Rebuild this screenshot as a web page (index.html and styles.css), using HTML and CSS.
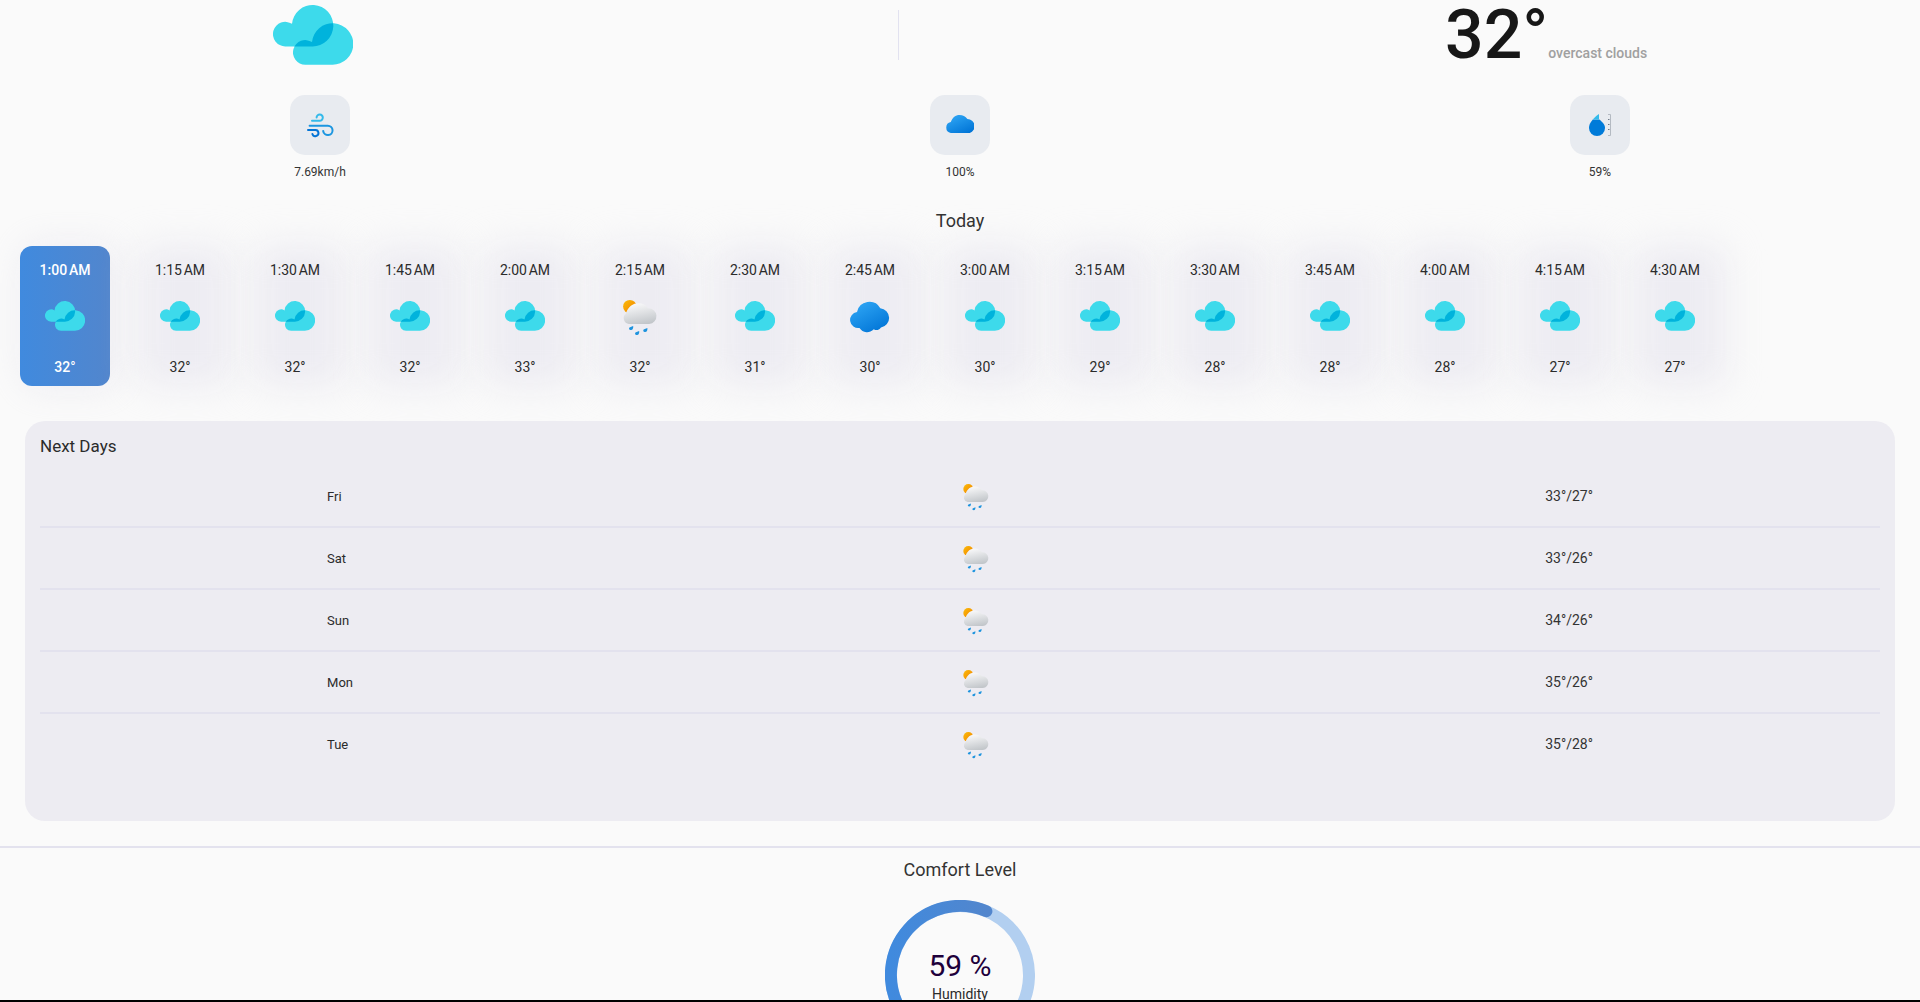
FILE: index.html
```html
<!DOCTYPE html>
<html lang="en">
<head>
<meta charset="utf-8">
<title>Weather</title>
<link rel="stylesheet" href="styles.css">
</head>
<body>
<svg class="defs" aria-hidden="true">
  <defs>
    <linearGradient id="sun-fill" x1="0" y1="0" x2="1" y2="1"><stop offset="0" stop-color="#fbbd08"/><stop offset="1" stop-color="#f07c00"/></linearGradient>
    <linearGradient id="grey-fill" x1="0.3" y1="0" x2="0.6" y2="1"><stop offset="0" stop-color="#fafafb"/><stop offset="1" stop-color="#c2c6ca"/></linearGradient>
    <linearGradient id="blue-fill" x1="0.1" y1="0" x2="0.8" y2="1"><stop offset="0" stop-color="#31a8f6"/><stop offset="1" stop-color="#0074d6"/></linearGradient>
    <linearGradient id="ring-fill" x1="0" y1="0" x2="1" y2="0"><stop offset="0" stop-color="#408ade"/><stop offset="1" stop-color="#5286cd"/></linearGradient>
    <path id="puff" d="M12.3 41.4A12.3 12.3 0 1 1 19 18.8A20.7 20.7 0 1 1 39.3 41.4Z"/>
    <clipPath id="puff-clip"><use href="#puff"/></clipPath>
    <symbol id="clouds" viewBox="0 0 80 60">
      <use href="#puff" fill="#3ddaeb"/>
      <use href="#puff" x="20" y="18.3" fill="#3ddaeb"/>
      <g clip-path="url(#puff-clip)"><use href="#puff" x="20" y="18.3" fill="#00b3dc"/></g>
    </symbol>
    <symbol id="rain" viewBox="0 0 40 40">
      <circle cx="9.8" cy="10.6" r="6.7" fill="url(#sun-fill)"/>
      <path d="M9 28A5.9 5.9 0 0 1 6 17.5C8 10.5 13 7.3 18.5 7.3C22.5 7.3 26 9 28 12.4A7.8 7.8 0 0 1 29.2 28Z" fill="url(#grey-fill)"/>
      <g fill="#1d93de">
        <path d="M13.2 30C13.4 32 12.8 34 11 34C9 34 8.4 32 10 31.2Z"/>
        <path d="M19.2 35C19.4 37 18.8 39 17 39C15 39 14.4 37 16 36.2Z"/>
        <path d="M27.4 32C27.6 34 27 36 25.2 36C23.2 36 22.6 34 24.2 33.2Z"/>
      </g>
    </symbol>
    <symbol id="overcast" viewBox="0 0 40 40">
      <path d="M7 15.9A12.6 12.6 0 0 1 30.3 12.2A9.8 9.8 0 0 1 31 31.6A5 5 0 0 1 23.8 33.2A9 9 0 0 1 9.5 32A8 8 0 0 1 7 15.9Z" fill="url(#blue-fill)"/>
    </symbol>
    <symbol id="wind" viewBox="0 0 28 28">
      <g fill="none" stroke-width="2" stroke-linecap="round">
        <path d="M6 9.7H13.5A3.1 3.1 0 1 0 10.6 6.6" stroke="#35baea"/>
        <path d="M3.6 14.7H21.8A4.7 4.7 0 1 1 17.2 20" stroke="#1c96e0"/>
        <path d="M2 19H9A3.1 3.1 0 1 1 6.4 23" stroke="#0474d6"/>
      </g>
    </symbol>
    <symbol id="cover" viewBox="0 0 28 28">
      <path d="M4.8 22A5.6 5.6 0 0 1 4.8 11C6.5 6.5 9.5 4 13.5 4C16.8 4 19.4 5.4 21.4 8A7.2 7.2 0 0 1 23.8 22Z" fill="url(#blue-fill)"/>
    </symbol>
    <symbol id="humidity" viewBox="0 0 28 28">
      <path d="M6.8 8.4C3.8 12 3 14.2 3 17A8 8 0 0 0 19 17C19 14.2 17.6 11.8 13.4 8.4Z" fill="#007bd9"/>
      <path d="M6.8 8.4C9 5.8 11 4.2 13 3V8.4Z" fill="#33bbeb"/>
      <path d="M22 3.5H24.5V24.5H22" fill="none" stroke="#b4bac2"/>
      <path d="M22 8.5H23.5M22 13.5H23.5M22 18.5H23.5" stroke="#6e7a88"/>
    </symbol>
  </defs>
</svg>

<main class="page">
  <header class="current">
    <svg class="current-icon" role="img" aria-label="Overcast clouds"><use href="#clouds"/></svg>
    <div class="current-rule"></div>
    <p class="current-text"><span class="current-temp">32°</span><span class="current-sky">overcast clouds</span></p>
  </header>

  <section class="metrics">
    <div class="metric"><div class="metric-tile"><svg><use href="#wind"/></svg></div><span>7.69km/h</span></div>
    <div class="metric"><div class="metric-tile"><svg><use href="#cover"/></svg></div><span>100%</span></div>
    <div class="metric"><div class="metric-tile"><svg><use href="#humidity"/></svg></div><span>59%</span></div>
  </section>

  <h2 class="heading">Today</h2>
  <ul class="hours">
    <li class="hour hour-active"><span>1:00&#8239;AM</span><svg><use href="#clouds"/></svg><span>32°</span></li>
    <li class="hour"><span>1:15&#8239;AM</span><svg><use href="#clouds"/></svg><span>32°</span></li>
    <li class="hour"><span>1:30&#8239;AM</span><svg><use href="#clouds"/></svg><span>32°</span></li>
    <li class="hour"><span>1:45&#8239;AM</span><svg><use href="#clouds"/></svg><span>32°</span></li>
    <li class="hour"><span>2:00&#8239;AM</span><svg><use href="#clouds"/></svg><span>33°</span></li>
    <li class="hour"><span>2:15&#8239;AM</span><svg><use href="#rain"/></svg><span>32°</span></li>
    <li class="hour"><span>2:30&#8239;AM</span><svg><use href="#clouds"/></svg><span>31°</span></li>
    <li class="hour"><span>2:45&#8239;AM</span><svg><use href="#overcast"/></svg><span>30°</span></li>
    <li class="hour"><span>3:00&#8239;AM</span><svg><use href="#clouds"/></svg><span>30°</span></li>
    <li class="hour"><span>3:15&#8239;AM</span><svg><use href="#clouds"/></svg><span>29°</span></li>
    <li class="hour"><span>3:30&#8239;AM</span><svg><use href="#clouds"/></svg><span>28°</span></li>
    <li class="hour"><span>3:45&#8239;AM</span><svg><use href="#clouds"/></svg><span>28°</span></li>
    <li class="hour"><span>4:00&#8239;AM</span><svg><use href="#clouds"/></svg><span>28°</span></li>
    <li class="hour"><span>4:15&#8239;AM</span><svg><use href="#clouds"/></svg><span>27°</span></li>
    <li class="hour"><span>4:30&#8239;AM</span><svg><use href="#clouds"/></svg><span>27°</span></li>
  </ul>

  <section class="days">
    <h2 class="days-title">Next Days</h2>
    <table class="days-table">
      <tbody>
        <tr><th scope="row">Fri</th><td><svg><use href="#rain"/></svg></td><td>33°/27°</td></tr>
        <tr><th scope="row">Sat</th><td><svg><use href="#rain"/></svg></td><td>33°/26°</td></tr>
        <tr><th scope="row">Sun</th><td><svg><use href="#rain"/></svg></td><td>34°/26°</td></tr>
        <tr><th scope="row">Mon</th><td><svg><use href="#rain"/></svg></td><td>35°/26°</td></tr>
        <tr><th scope="row">Tue</th><td><svg><use href="#rain"/></svg></td><td>35°/28°</td></tr>
      </tbody>
    </table>
  </section>

  <section class="comfort">
    <h2 class="heading">Comfort Level</h2>
    <div class="gauge">
      <svg class="gauge-ring" viewBox="0 0 150 150" fill="none" stroke-width="12" stroke-linecap="round">
        <path d="M15.2 109.5A69 69 0 1 1 134.8 109.5" stroke="#b2cff0"/>
        <path d="M15.2 109.5A69 69 0 0 1 101.4 11.2" stroke="url(#ring-fill)"/>
      </svg>
      <span class="gauge-value">59 %</span>
      <span class="gauge-label">Humidity</span>
    </div>
  </section>
</main>
</body>
</html>
```
FILE: styles.css
```css
* {
  box-sizing: border-box;
}

body {
  margin: 0;
  background: #000;
  color: #2b2b2b;
  font-family: Roboto, "Liberation Sans", sans-serif;
  font-size: 14px;
  line-height: 20px;
}

h2,
p,
ul {
  margin: 0;
  padding: 0;
}

svg {
  display: block;
}

.defs {
  position: absolute;
  width: 0;
  height: 0;
}

.page {
  height: calc(100vh - 2px);
  overflow: hidden;
  background: #fafafa;
}

.current {
  display: flex;
  justify-content: space-around;
  align-items: center;
  height: 70px;
}

.current-icon {
  width: 80px;
  height: 60px;
}

.current-rule {
  width: 1px;
  height: 50px;
  background: #e2e2f0;
}

.current-text {
  display: flex;
  align-items: baseline;
  padding-top: 18px;
  font-weight: 500;
  line-height: 70px;
}

.current-temp {
  font-size: 68px;
  color: #171717;
}

.current-sky {
  color: #a0a0a0;
}

.metrics {
  display: grid;
  grid-template-columns: repeat(3, 1fr);
  margin-top: 25px;
  font-size: 12px;
  color: #333;
}

.metric {
  display: flex;
  flex-direction: column;
  align-items: center;
  gap: 7px;
}

.metric-tile {
  padding: 16px;
  border-radius: 15px;
  background: #e8ebf0;
}

.metric-tile svg {
  width: 28px;
  height: 28px;
}

.heading {
  font-size: 18px;
  font-weight: 400;
  text-align: center;
  color: #333;
}

.metrics + .heading {
  position: relative;
  z-index: 1;
  margin-top: 29px;
}

.hours {
  display: flex;
  gap: 25px;
  margin-top: 15px;
  padding-left: 20px;
  list-style: none;
}

.hour {
  position: relative;
  z-index: 0;
  display: flex;
  flex: none;
  flex-direction: column;
  align-items: center;
  width: 90px;
  height: 140px;
  padding-top: 14px;
  border-radius: 12px;
}

/* soft halo that also shows through the card itself */
.hour::before {
  content: "";
  position: absolute;
  z-index: -1;
  inset: 0 -6px 0 4px;
  border-radius: 12px;
  background: rgba(228, 226, 237, 0.6);
  filter: blur(18px);
}

.hour svg {
  width: 40px;
  height: 40px;
  margin: 16px 0 21px;
}

.hour-active {
  color: #fff;
  font-weight: 500;
  background: linear-gradient(90deg, #408ade, #5286cd);
  box-shadow: 5px 0 36px rgba(228, 226, 237, 0.6);
}

.hour-active::before {
  display: none;
}

.days {
  position: relative;
  min-height: 400px;
  margin: 35px 25px 25px;
  padding: 15px;
  border-radius: 20px;
  background: #edecf2;
}

.days-title {
  margin-bottom: 10px;
  font-size: 17px;
  font-weight: 400;
}

.days-table,
.days-table tbody {
  display: block;
}

.days-table tr {
  display: flex;
  justify-content: space-between;
  align-items: center;
  height: 62px;
  padding: 0 15.6%;
  border-bottom: 2px solid #e3e2ee;
}

.days-table tr:last-child {
  border-bottom-color: transparent;
}

.days-table th {
  width: 80px;
  padding: 2px 0 0;
  font-size: 13px;
  font-weight: 400;
  text-align: left;
}

.days-table td {
  padding: 0;
  color: #333;
}

.days-table svg {
  width: 30px;
  height: 30px;
}

.comfort {
  padding-top: 12px;
  border-top: 2px solid #e3e2ee;
}

.gauge {
  display: grid;
  justify-items: center;
  align-content: start;
  width: 150px;
  margin: 20px auto 0;
}

.gauge-ring {
  grid-area: 1 / 1 / 4 / 2;
  width: 150px;
  height: 150px;
}

.gauge-value {
  grid-area: 1 / 1;
  padding-top: 48px;
  font-size: 30px;
  line-height: 36px;
  color: #1e003b;
}

.gauge-label {
  grid-area: 2 / 1;
}
```
